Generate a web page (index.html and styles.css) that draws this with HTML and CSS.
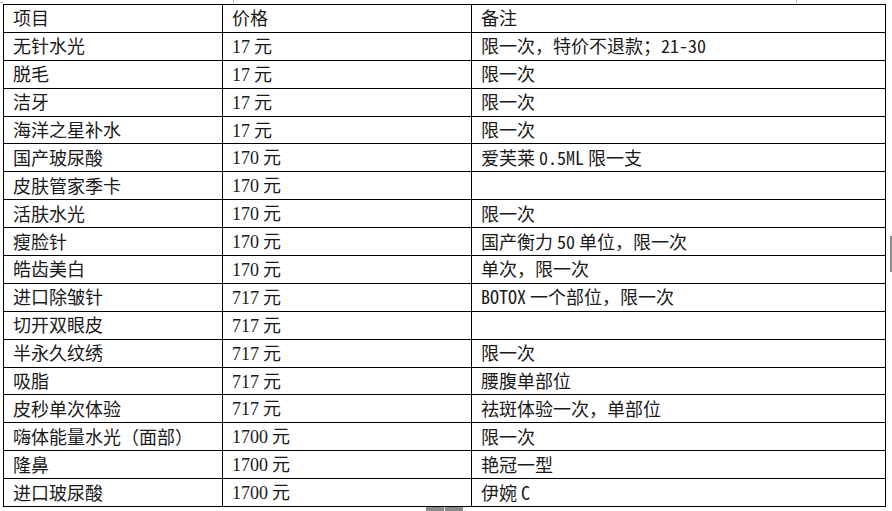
FILE: index.html
```html
<!DOCTYPE html>
<html lang="zh-CN">
<head>
<meta charset="utf-8">
<title>价格表</title>
<link rel="stylesheet" href="styles.css">
</head>
<body>
<div class="page">
  <table class="price-table">
    <colgroup>
      <col class="c-item">
      <col class="c-price">
      <col class="c-note">
    </colgroup>
    <tbody>
      <tr><td>项目</td><td>价格</td><td>备注</td></tr>
      <tr><td>无针水光</td><td><span class="num">17</span> 元</td><td>限一次，特价不退款；<span class="lat">21-30</span></td></tr>
      <tr><td>脱毛</td><td><span class="num">17</span> 元</td><td>限一次</td></tr>
      <tr><td>洁牙</td><td><span class="num">17</span> 元</td><td>限一次</td></tr>
      <tr><td>海洋之星补水</td><td><span class="num">17</span> 元</td><td>限一次</td></tr>
      <tr><td>国产玻尿酸</td><td><span class="num">170</span> 元</td><td>爱芙莱 <span class="lat">0.5ML</span> 限一支</td></tr>
      <tr><td>皮肤管家季卡</td><td><span class="num">170</span> 元</td><td></td></tr>
      <tr><td>活肤水光</td><td><span class="num">170</span> 元</td><td>限一次</td></tr>
      <tr><td>瘦脸针</td><td><span class="num">170</span> 元</td><td>国产衡力 <span class="lat">50</span> 单位，限一次</td></tr>
      <tr><td>皓齿美白</td><td><span class="num">170</span> 元</td><td>单次，限一次</td></tr>
      <tr><td>进口除皱针</td><td><span class="num">717</span> 元</td><td><span class="lat">BOTOX</span> 一个部位，限一次</td></tr>
      <tr><td>切开双眼皮</td><td><span class="num">717</span> 元</td><td></td></tr>
      <tr><td>半永久纹绣</td><td><span class="num">717</span> 元</td><td>限一次</td></tr>
      <tr><td>吸脂</td><td><span class="num">717</span> 元</td><td>腰腹单部位</td></tr>
      <tr><td>皮秒单次体验</td><td><span class="num">717</span> 元</td><td>祛斑体验一次，单部位</td></tr>
      <tr><td>嗨体能量水光（面部）</td><td><span class="num">1700</span> 元</td><td>限一次</td></tr>
      <tr><td>隆鼻</td><td><span class="num">1700</span> 元</td><td>艳冠一型</td></tr>
      <tr><td>进口玻尿酸</td><td><span class="num">1700</span> 元</td><td>伊婉 <span class="lat">C</span></td></tr>
    </tbody>
  </table>
  <span class="mark mark-corner"></span>
  <span class="mark mark-tick1"></span>
  <span class="mark mark-tick2"></span>
  <span class="chrome chrome-bottom"></span>
  <span class="chrome chrome-right"></span>
</div>
</body>
</html>
```

FILE: styles.css
```css
html, body {
  margin: 0;
  padding: 0;
  background: #ffffff;
}

.page {
  position: relative;
  width: 892px;
  height: 511px;
  overflow: hidden;
  padding: 4px 0 0 3px;
  box-sizing: border-box;
}

.price-table {
  border-collapse: collapse;
  table-layout: fixed;
  width: 882px;
  font-family: "Noto Sans CJK SC", "Noto Sans CJK JP", sans-serif;
  font-size: 18px;
  color: #1a1a1a;
}

.c-item { width: 219px; }
.c-price { width: 249px; }
.c-note { width: 414px; }

.price-table tr {
  height: 27.9px;
}

.price-table td {
  border: 1px solid #000000;
  padding: 0 0 2px 9px;
  line-height: 20px;
  vertical-align: middle;
  white-space: nowrap;
  overflow: hidden;
}

.num {
  font-family: "Liberation Serif", serif;
  font-size: 18px;
  line-height: 18px;
}

.lat {
  font-family: "Noto Sans Mono CJK SC", "Liberation Mono", monospace;
  font-size: 18px;
  line-height: 18px;
}

.mark {
  position: absolute;
  background: #b8b8b8;
}

.mark-corner {
  left: 0;
  top: 2px;
  width: 3px;
  height: 1px;
}

.mark-tick1 {
  left: 233px;
  top: 0;
  width: 1px;
  height: 3px;
}

.mark-tick2 {
  left: 796px;
  top: 0;
  width: 1px;
  height: 3px;
}

.chrome {
  position: absolute;
  background: #8a8a8a;
}

.chrome-bottom {
  left: 426px;
  top: 507px;
  width: 37px;
  height: 4px;
  background: linear-gradient(to right, #8a8a8a 0 18px, #f0f0f0 18px 19px, #8a8a8a 19px);
}

.chrome-right {
  left: 890px;
  top: 236px;
  width: 2px;
  height: 36px;
}
```
